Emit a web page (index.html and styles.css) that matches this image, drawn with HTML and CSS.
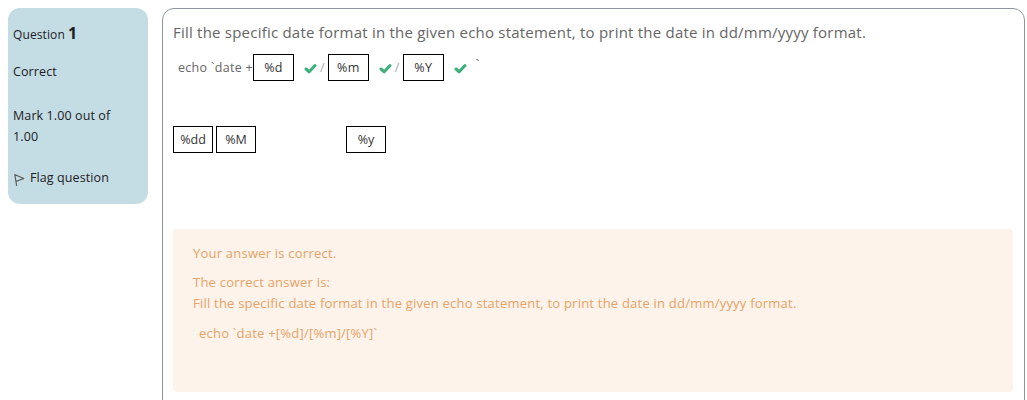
FILE: index.html
```html
<!DOCTYPE html>
<html>
<head>
<meta charset="utf-8">
<link rel="stylesheet" href="styles.css">
</head>
<body>
<div class="que">
  <div class="info">
    <div class="qno">Question <span class="num">1</span></div>
    <div class="state">Correct</div>
    <div class="grade">Mark 1.00 out of 1.00</div>
    <div class="flag">
      <svg class="flag-icon" width="12" height="13" viewBox="0 0 12 13"><path d="M1.8 1.5 L3.6 12.4 M2 1.8 L10.8 5.4 L2.9 8.6" fill="none" stroke="#555" stroke-width="1.1" stroke-linejoin="round" stroke-linecap="round"/></svg>
      <span>Flag question</span>
    </div>
  </div>
  <div class="content">
    <div class="qtext">Fill the specific date format in the given echo statement, to print the date in dd/mm/yyyy format.</div>
    <div class="answer-line">
      <span class="code">echo `date +</span><span class="drop">%d</span><span class="tick"><svg width="13" height="11" viewBox="0 0 13 11"><path d="M2 6 L5.2 8.8 L11 2.5" fill="none" stroke="#3bb07a" stroke-width="3" stroke-linecap="round" stroke-linejoin="round"/></svg></span><span class="sep">/</span><span class="drop">%m</span><span class="tick"><svg width="13" height="11" viewBox="0 0 13 11"><path d="M2 6 L5.2 8.8 L11 2.5" fill="none" stroke="#3bb07a" stroke-width="3" stroke-linecap="round" stroke-linejoin="round"/></svg></span><span class="sep">/</span><span class="drop">%Y</span><span class="tick"><svg width="13" height="11" viewBox="0 0 13 11"><path d="M2 6 L5.2 8.8 L11 2.5" fill="none" stroke="#3bb07a" stroke-width="3" stroke-linecap="round" stroke-linejoin="round"/></svg></span><span class="tail">`</span>
    </div>
    <div class="choices">
      <span class="choice">%dd</span><span class="choice">%M</span><span class="choice gap">%y</span>
    </div>
    <div class="feedback">
      <div class="fb1">Your answer is correct.</div>
      <div class="fb2">The correct answer is:</div>
      <div class="fb3">Fill the specific date format in the given echo statement, to print the date in dd/mm/yyyy format.</div>
      <div class="fb4">echo `date +[%d]/[%m]/[%Y]`</div>
    </div>
  </div>
</div>
</body>
</html>
```

FILE: styles.css
```css
html, body {
  margin: 0;
  padding: 0;
  background: #fff;
}
body {
  font-family: "Open Sans", "Noto Sans", sans-serif;
  color: #1d2125;
  overflow: hidden;
}
.que {
  display: flex;
  align-items: flex-start;
  padding: 8px 2px 0 8px;
  gap: 14px;
}
.info {
  width: 140px;
  height: 196px;
  box-sizing: border-box;
  background: #c4dce4;
  border-radius: 12px;
  padding: 16px 5px 0 5px;
  font-size: 12.5px;
  color: #1d2125;
  flex: none;
  letter-spacing: 0.1px;
}
.qno {
  font-size: 12px;
  line-height: 18px;
}
.qno .num {
  font-size: 16px;
  font-weight: 700;
}
.state {
  margin-top: 20px;
  line-height: 16px;
}
.grade {
  margin-top: 25px;
  line-height: 21px;
  width: 120px;
}
.flag {
  margin-top: 22px;
  display: flex;
  align-items: center;
  gap: 5px;
  line-height: 18px;
}
.flag-icon {
  margin-top: 3px;
}
.content {
  flex: 1;
  height: 430px;
  border: 1px solid #8f959e;
  border-radius: 12px;
  padding: 12px 10px 0 10px;
  box-sizing: border-box;
}
.qtext {
  font-size: 15px;
  letter-spacing: 0.22px;
  color: #666;
  line-height: 22px;
}
.answer-line {
  display: flex;
  align-items: center;
  margin-top: 10px;
  font-size: 12.5px;
  letter-spacing: 0.3px;
  color: #666;
  height: 28px;
}
.code {
  padding-left: 5px;
}
.drop, .choice {
  display: inline-flex;
  align-items: center;
  justify-content: center;
  box-sizing: border-box;
  height: 27px;
  width: 41px;
  border: 1px solid #000;
  color: #333;
  font-size: 12.5px;
  background: #fff;
}
.tick {
  display: inline-flex;
  margin: 2px 3px 0 10px;
}
.sep {
  margin: 0 3px 0 0;
  color: #aaa;
}
.tail {
  margin-left: 6px;
  align-self: flex-start;
  margin-top: 3px;
}
.choices {
  display: flex;
  margin-top: 45px;
  gap: 3px;
}
.choices .choice {
  width: 40px;
}
.choices .gap {
  margin-left: 87px;
}
.feedback {
  margin-top: 76px;
  width: 840px;
  height: 163px;
  box-sizing: border-box;
  background: #fdf3ea;
  border-radius: 4px;
  padding: 15px 20px 0 20px;
  color: #e8a268;
  font-size: 13px;
  letter-spacing: 0.22px;
}
.fb1 {
  line-height: 18px;
}
.fb2 {
  margin-top: 11px;
  line-height: 18px;
}
.fb3 {
  margin-top: 3px;
  line-height: 18px;
}
.fb4 {
  margin-top: 12px;
  padding-left: 6px;
  line-height: 18px;
}
```
